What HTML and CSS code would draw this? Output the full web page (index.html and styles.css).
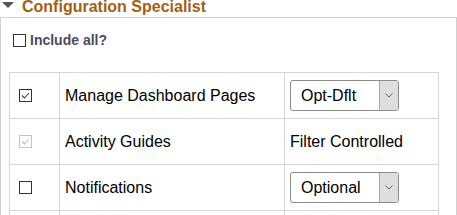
FILE: index.html
```html
<!DOCTYPE html>
<html>
<head>
<meta charset="utf-8">
<link rel="stylesheet" href="styles.css">
</head>
<body>
<div class="header">
  <svg class="caret" width="12" height="6" viewBox="0 0 12 6"><polygon points="0,0 12,0 6,6" fill="#555"/></svg>
  <span class="title">Configuration Specialist</span>
</div>
<div class="panel">
  <div class="include">
    <span class="cb"></span>
    <span class="include-label">Include all?</span>
  </div>
  <div class="grid">
    <div class="cell c1"><span class="cb"><svg viewBox="0 0 11 11" width="11" height="11"><polyline points="2,5.5 4.5,8 9,3" fill="none" stroke="#444" stroke-width="1.1"/></svg></span></div>
    <div class="cell c2">Manage Dashboard Pages</div>
    <div class="cell c3"><div class="select"><span class="sel-text">Opt-Dflt</span><span class="sel-btn"><svg width="8" height="5" viewBox="0 0 8 5"><polyline points="0.5,0.5 4,4 7.5,0.5" fill="none" stroke="#666" stroke-width="1"/></svg></span></div></div>

    <div class="cell c1"><span class="cb disabled"><svg viewBox="0 0 11 11" width="11" height="11"><polyline points="2,5.5 4.5,8 9,3" fill="none" stroke="#bbb" stroke-width="1.1"/></svg></span></div>
    <div class="cell c2">Activity Guides</div>
    <div class="cell c3">Filter Controlled</div>

    <div class="cell c1"><span class="cb"></span></div>
    <div class="cell c2">Notifications</div>
    <div class="cell c3"><div class="select"><span class="sel-text">Optional</span><span class="sel-btn"><svg width="8" height="5" viewBox="0 0 8 5"><polyline points="0.5,0.5 4,4 7.5,0.5" fill="none" stroke="#666" stroke-width="1"/></svg></span></div></div>

    <div class="cell c1 last"></div>
    <div class="cell c2 last"></div>
    <div class="cell c3 last"></div>
  </div>
</div>
</body>
</html>
```
FILE: styles.css
```css
html, body {
  margin: 0;
  padding: 0;
  background: #fff;
  width: 457px;
  height: 215px;
  overflow: hidden;
  font-family: "Liberation Sans", Arial, sans-serif;
}

.header {
  height: 17px;
  display: flex;
  align-items: flex-start;
}

.caret {
  margin: 2px 0 0 2px;
  flex: none;
}

.title {
  margin-left: 8px;
  margin-top: -2px;
  line-height: 17px;
  font-size: 16px;
  font-weight: bold;
  color: #a65e12;
  white-space: nowrap;
}

.panel {
  box-sizing: border-box;
  width: 457px;
  border: 1px solid #cdd1d6;
  border-bottom: none;
  height: 198px;
  overflow: hidden;
}

.include {
  display: flex;
  align-items: center;
  margin: 14px 0 0 12px;
  height: 16px;
}

.include-label {
  margin-left: 4px;
  font-size: 14px;
  line-height: 16px;
  font-weight: bold;
  color: #4c4c57;
}

.cb {
  box-sizing: border-box;
  display: inline-flex;
  align-items: center;
  justify-content: center;
  width: 13px;
  height: 13px;
  border: 1px solid #333;
  background: #fff;
  flex: none;
}

.cb.disabled {
  border-color: #c4c4c4;
}

.grid {
  margin: 24px 0 0 8px;
  width: 430px;
  box-sizing: border-box;
  display: grid;
  grid-template-columns: 50px 225px 154px;
  grid-template-rows: 46px 46px 46px 4px;
  border-left: 1px solid #d3d6da;
  border-top: 1px solid #d3d6da;
}

.cell {
  box-sizing: border-box;
  border-right: 1px solid #d3d6da;
  border-bottom: 1px solid #d3d6da;
  display: flex;
  align-items: center;
  font-size: 16px;
  color: #000;
  white-space: nowrap;
}

.cell.last {
  border-bottom: none;
}

.c1 { padding-left: 9px; }
.c2 { padding-left: 5px; }
.c3 { padding-left: 5px; }

.select {
  box-sizing: border-box;
  width: 109px;
  height: 31px;
  border: 1px solid #8c8c8c;
  border-radius: 3px;
  display: flex;
  overflow: hidden;
  background: #fff;
}

.sel-text {
  flex: 1;
  padding-left: 10px;
  line-height: 29px;
  font-size: 16px;
  color: #000;
}

.sel-btn {
  width: 18px;
  background: #dedede;
  border-left: 1px solid #a8a8a8;
  display: flex;
  align-items: center;
  justify-content: center;
}
```
